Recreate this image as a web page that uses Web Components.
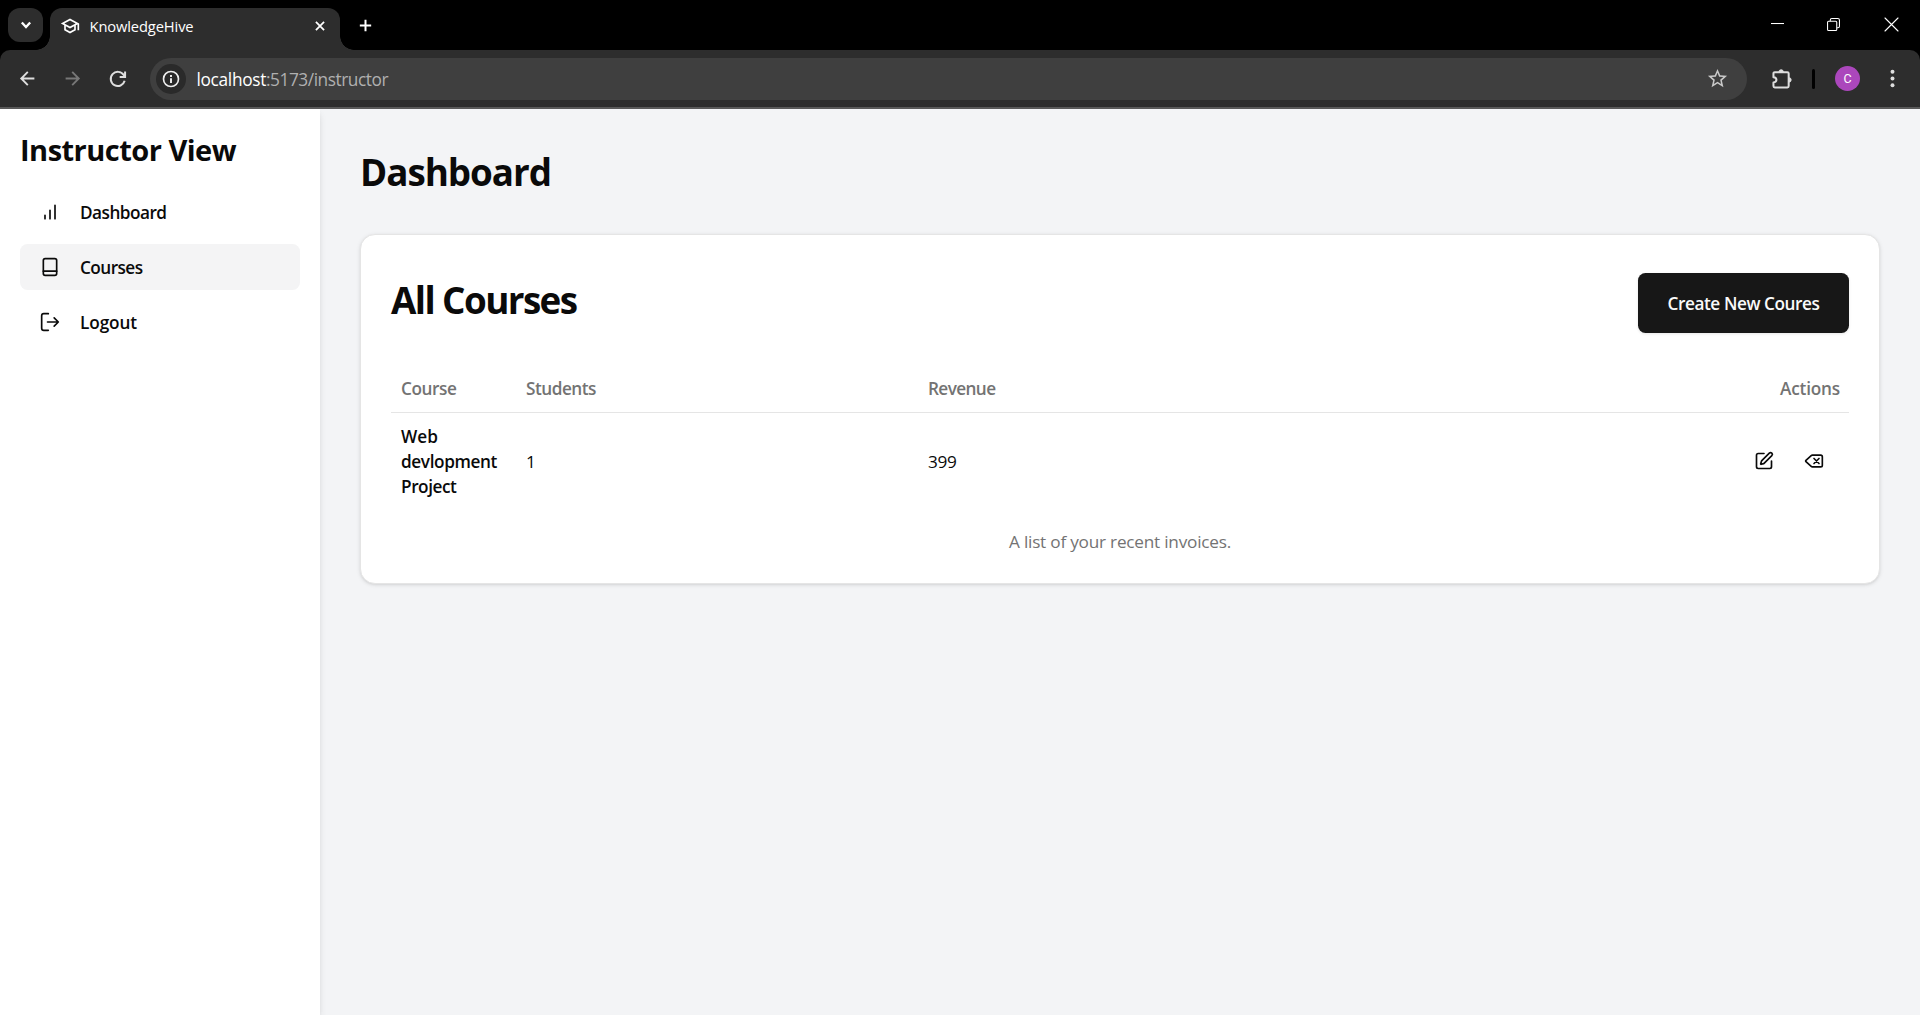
<!DOCTYPE html>
<html lang="en">
<head>
<meta charset="utf-8">
<title>KnowledgeHive</title>
<style>
html,body{margin:0;height:100%;overflow:hidden;background:#f3f4f6}
body{font-family:"Open Sans","Noto Sans",sans-serif;color:#0a0a0a}
</style>
</head>
<body>
<kh-window>
  <kh-tabstrip slot="chrome" label="KnowledgeHive"></kh-tabstrip>
  <kh-toolbar slot="chrome"></kh-toolbar>
  <kh-sidebar slot="side">
    <kh-nav-item icon="chart" label="Dashboard" w="86.5"></kh-nav-item>
    <kh-nav-item icon="book" label="Courses" w="62.5" active></kh-nav-item>
    <kh-nav-item icon="logout" label="Logout" w="57"></kh-nav-item>
  </kh-sidebar>
  <kh-dashboard><kh-course-card></kh-course-card></kh-dashboard>
</kh-window>
<script>
const icons={
 chart:'<path d="M12 20V10M18 20V4M6 20v-4"/>',
 book:'<rect x="4" y="2" width="16" height="20" rx="2.2"/><path d="M4 17h16"/>',
 logout:'<path d="M10 22H4.500A2.500 2.500 0 0 1 2 19.500v-15A2.500 2.500 0 0 1 4.500 2H10"/><path d="m17 17 5-5-5-5M22 12H9"/>',
 edit:'<path d="M12 3H5a2 2 0 0 0-2 2v14a2 2 0 0 0 2 2h14a2 2 0 0 0 2-2v-7"/><path d="M18.375 2.625a1 1 0 0 1 3 3l-9.013 9.014a2 2 0 0 1-.853.505l-2.873.84a.5.5 0 0 1-.62-.62l.84-2.873a2 2 0 0 1 .506-.852z"/>',
 del:'<path d="M10 5a2 2 0 0 0-1.344.519l-6.328 5.740a1 1 0 0 0 0 1.481l6.328 5.741A2 2 0 0 0 10 19h10a2 2 0 0 0 2-2V7a2 2 0 0 0-2-2z"/><path d="m12 9 6 6M18 9l-6 6"/>',
 cap:'<path fill="currentColor" stroke="none" d="M12 3 1 9l4 2.180v6L12 21l7-3.820v-6l2-1.090V17h2V9L12 3zm6.820 6L12 12.720 5.180 9 12 5.280 18.820 9zM17 15.990l-5 2.730-5-2.730v-3.720L12 15l5-2.730v3.720z"/>',
 down:'<path d="m7 9 5 5.500 5-5.500"/>',
 close:'<path d="m5 5 14 14M19 5 5 19"/>',
 plus:'<path d="M12 4v16M4 12h16"/>',
 back:'<path d="M23 12H2M12.500 1.500 2 12l10.500 10.500"/>',
 fwd:'<path d="M1 12h21M11.500 1.500 22 12 11.500 22.500"/>',
 reload:'<path d="M20 14.200A8.500 8.500 0 1 1 18.800 7.100L20.500 9M20.500 3v6.500h-6.500"/>',
 info:'<circle cx="12" cy="12" r="10"/><path fill="currentColor" stroke="none" d="M10.700 11h2.600v6.200h-2.600zM10.700 6.800h2.600v2.500h-2.600z"/>',
 star:'<path fill="currentColor" stroke="none" d="M22 9.240l-7.190-.62L12 2 9.190 8.630 2 9.240l5.460 4.730L5.820 21 12 17.270 18.180 21l-1.630-7.030L22 9.240zM12 15.400l-3.760 2.270 1-4.280-3.320-2.880 4.380-.38L12 6.100l1.710 4.040 4.380.38-3.320 2.880 1 4.280L12 15.400z"/>',
 puzzle:'<path d="M4.300 4.800h14.400a1.500 1.500 0 0 1 1.500 1.500v14.400a1.500 1.500 0 0 1-1.500 1.500H4.300a1.500 1.500 0 0 1-1.500-1.500v-4.200c2.600-.2 3.400-1.500 3.400-3s-.8-2.800-3.400-3V6.300a1.500 1.500 0 0 1 1.500-1.500z"/><path d="M9 4.500a2.600 2.600 0 0 1 5.200 0zM20.500 11a2.600 2.600 0 0 1 0 5.200z" fill="currentColor" stroke-width="1"/>',
 more:'<g fill="currentColor" stroke="none"><circle cx="12" cy="3.500" r="2.500"/><circle cx="12" cy="12" r="2.500"/><circle cx="12" cy="20.500" r="2.500"/></g>',
 min:'<path d="M0 10.200h24"/>',
 restore:'<rect x="1" y="6" width="17" height="17" rx="2"/><path d="M6 5V4a3 3 0 0 1 3-3h11a3 3 0 0 1 3 3v11a3 3 0 0 1-3 3h-1"/>',
 x:'<path d="m0 0 24 24M24 0 0 24"/>'
};
class Base extends HTMLElement{
 connectedCallback(){ if(!this.shadowRoot){this.attachShadow({mode:'open'}).innerHTML='<style>:host{display:block;box-sizing:border-box}*{box-sizing:border-box}</style>'+this.view();} this.ready&&this.ready(); }
 a(n,d=''){return this.getAttribute(n)??d}
}
/* Icon on a 24-unit grid: s = size, t = stroke width */
customElements.define('kh-icon',class extends Base{view(){const s=this.a('s','20');
 return `<style>:host{display:block;flex:none;width:${s}px;height:${s}px}svg{display:block;overflow:visible}</style><svg width="${s}" height="${s}" viewBox="0 0 24 24" fill="none" stroke="currentColor" stroke-width="${this.a('t','2')}" stroke-linecap="${this.a('cap','round')}" stroke-linejoin="${this.a('join','round')}">${icons[this.a('name')]}</svg>`}});
/* One line of text whose tracking is set so that it spans w pixels */
customElements.define('kh-text',class extends Base{view(){return `<style>:host{display:block;flex:none;white-space:nowrap}</style><span>${this.a('t')}</span>`}
 ready(){const s=this.shadowRoot.querySelector('span'),w=+this.a('w','0'),n=this.a('t').length;
  if(w&&n>1){s.style.letterSpacing='0';s.style.letterSpacing=((w-s.getBoundingClientRect().width)/n)+'px'}}});
customElements.define('kh-window',class extends Base{view(){return `<style>:host{display:flex;flex-direction:column;height:100vh}.b{flex:1;display:flex;min-height:0}main{flex:1}</style>
 <slot name="chrome"></slot><div class="b"><slot name="side"></slot><main><slot></slot></main></div>`}});
customElements.define('kh-tabstrip',class extends Base{view(){return `<style>
 :host{display:flex;height:50px;background:#000;color:#fff;padding:8px 14px 0 8px;align-items:flex-start}
 .dd{width:35px;height:34px;border-radius:12px;background:#2d2d2d;display:grid;place-items:center}
 .tab{position:relative;margin-left:7px;width:290px;height:42px;background:#2d2d2d;border-radius:12px 12px 0 0;display:flex;align-items:center;padding:0 13px 7px 10px}
 .tab:before,.tab:after{content:"";position:absolute;bottom:0;width:14px;height:14px}
 .tab:before{left:-14px;background:radial-gradient(circle at 0 0,#0000 13.5px,#2d2d2d 14px)}
 .tab:after{right:-14px;background:radial-gradient(circle at 100% 0,#0000 13.5px,#2d2d2d 14px)}
 .tab kh-text{margin-left:9.500px;flex:1;font-size:14.7px;line-height:20px}
 .plus{margin:9px 0 0 17px}.win{margin-left:auto;display:flex;padding:10px 8px 0 0}.win>:nth-child(2){margin:0 45px 0 43px}
 </style><div class="dd"><kh-icon name="down" s="20" t="2.8" cap="butt" join="miter"></kh-icon></div>
 <div class="tab"><kh-icon name="cap" s="20"></kh-icon><kh-text t="${this.a('label')}" w="104"></kh-text><kh-icon name="close" s="14" t="3" cap="butt"></kh-icon></div>
 <div class="plus"><kh-icon name="plus" s="17" t="2.800" cap="butt"></kh-icon></div>
 <div class="win"><kh-icon name="min" s="13" t="1.9" cap="butt"></kh-icon><kh-icon name="restore" s="13" t="2"></kh-icon><kh-icon name="x" s="13" t="2"></kh-icon></div>`}});
customElements.define('kh-toolbar',class extends Base{view(){return `<style>
 :host{height:59px;background:#000;color:#dedede}
 .bar{height:59px;background:#2d2d2d;border-bottom:2px solid #595959;border-radius:10px 10px 0 0;display:flex;align-items:center;padding:0 18px 0 20px}
 .bar>*{flex:none}
 .fwd{margin-left:30px;color:#777}.re{margin-left:28px}
 .url{margin-left:22px;width:1597px;height:42px;border-radius:21px;background:#3f3f3f;display:flex;align-items:center;padding:0 18px 0 6px}
 .i{width:30px;height:30px;border-radius:50%;background:#2a2a2a;display:grid;place-items:center;margin-right:10.5px;color:#eee}
 .url kh-text{font-size:17.3px;line-height:24px;padding-top:2px}.h{color:#fff}.r{color:#b0b0b0}
 .star{margin-left:auto;color:#c9c9c9}.pz{margin-left:24px}
 .sep{width:3px;height:20px;border-radius:2px;background:#000;margin:0 20px 0 20px}
 .av{width:25px;height:25px;border-radius:50%;background:#ab47bc;color:#fff;display:grid;place-items:center;font:12.500px/25px Roboto,sans-serif}
 .more{margin-left:23px}</style>
 <div class="bar"><kh-icon name="back" s="15" t="3" join="miter" cap="butt"></kh-icon><kh-icon class="fwd" name="fwd" s="15" t="3" join="miter" cap="butt"></kh-icon><kh-icon class="re" name="reload" s="20" t="2.4" join="miter" cap="butt"></kh-icon>
 <div class="url"><div class="i"><kh-icon name="info" s="18" t="2.2"></kh-icon></div><kh-text class="h" t="localhost" w="69.5"></kh-text><kh-text class="r" t=":5173/instructor" w="122"></kh-text><kh-icon class="star" name="star" s="23"></kh-icon></div>
 <kh-icon class="pz" name="puzzle" s="21" t="2.3"></kh-icon><div class="sep"></div><div class="av">C</div><kh-icon class="more" name="more" s="19"></kh-icon></div>`}});
customElements.define('kh-sidebar',class extends Base{view(){return `<style>
 :host{width:320px;background:#fff;padding:21px 20px 20px;box-shadow:0 5px 8px -1px #0000001a,0 2px 5px -2px #0000001a;position:relative;clip-path:inset(0 -20px 0 0)}
 h1{margin:0 0 19px;font-size:29px;line-height:40px;font-weight:700}nav{display:flex;flex-direction:column;gap:9px}</style>
 <h1><kh-text t="Instructor View" w="216"></kh-text></h1><nav><slot></slot></nav>`}});
customElements.define('kh-nav-item',class extends Base{view(){return `<style>
 :host{display:flex;align-items:center;height:46px;border-radius:7.5px;padding:0 20px;font-size:17.2px;font-weight:600;line-height:25px}
 :host([active]){background:#f4f4f5}kh-icon{margin-right:20px}</style>
 <kh-icon name="${this.a('icon')}" s="20"></kh-icon><kh-text t="${this.a('label')}" w="${this.a('w')}"></kh-text>`}});
customElements.define('kh-dashboard',class extends Base{view(){return `<style>:host{padding:41px 40px 0}h1{margin:0 0 39px;font-size:36.8px;line-height:45px;font-weight:700}</style>
 <h1><kh-text t="Dashboard" w="191"></kh-text></h1><slot></slot>`}});
customElements.define('kh-button',class extends Base{view(){return `<style>:host{display:flex;align-items:center;justify-content:center;width:211px;height:60px;border-radius:7.5px;background:#171717;color:#fafafa;font-size:17.2px;font-weight:600;box-shadow:0 1px 3px #0000001a}</style><kh-text t="${this.a('label')}" w="152"></kh-text>`}});
customElements.define('kh-course-card',class extends Base{view(){return `<style>
 :host{height:350px;background:#fff;border:1px solid #e5e5e5;border-radius:15px;padding:38px 30px 0;box-shadow:0 1px 4px #0000001a,0 1px 3px -1px #0000001a}
 header{display:flex;justify-content:space-between;height:60px;margin-bottom:30px}
 h3{margin:5px 0 0 0;font-size:36.8px;line-height:45px;font-weight:700}
 .row{display:grid;grid-template-columns:125px 402px 1fr auto;padding:0 9px 0 10px;align-items:center;font-size:17.2px;line-height:25px}
 .head{height:50px;border-bottom:1px solid #e5e5e5;color:#737373;font-weight:600;padding-top:1px}
 .body{height:95px;padding-top:1px}.n{font-weight:600}.act{display:flex;gap:30px;padding:0 16px 1px 0}
 .cap{margin-top:21px;display:flex;justify-content:center;color:#737373;font-size:17.2px;line-height:25px}</style>
 <header><h3><kh-text t="All Courses" w="185.5"></kh-text></h3><kh-button label="Create New Coures"></kh-button></header>
 <div class="row head"><kh-text t="Course" w="55.5"></kh-text><kh-text t="Students" w="70"></kh-text><kh-text t="Revenue" w="67.5"></kh-text><kh-text t="Actions" w="60"></kh-text></div>
 <div class="row body"><div class="n"><kh-text t="Web" w="37"></kh-text><kh-text t="devlopment" w="96"></kh-text><kh-text t="Project" w="55.5"></kh-text></div><kh-text t="1"></kh-text><kh-text t="399" w="28.5"></kh-text><div class="act"><kh-icon name="edit"></kh-icon><kh-icon name="del"></kh-icon></div></div>
 <div class="cap"><kh-text t="A list of your recent invoices." w="222"></kh-text></div>`}});
</script>
</body>
</html>
